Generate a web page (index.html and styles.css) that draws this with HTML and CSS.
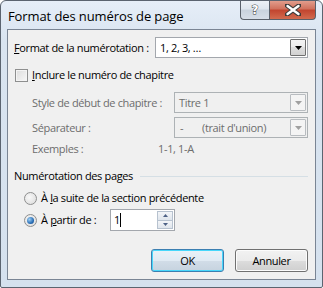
FILE: index.html
```html
<!DOCTYPE html>
<html lang="fr">
<head>
<meta charset="utf-8">
<title>Format des numéros de page</title>
<link rel="stylesheet" href="styles.css">
</head>
<body>
<div class="window">
  <div class="titlebar">
    <span class="title">Format des numéros de page</span>
    <div class="caption-btns">
      <div class="cbtn help">
        <svg width="12" height="13" viewBox="0 0 12 13"><text x="6" y="11" text-anchor="middle" class="qmark">?</text></svg>
      </div>
      <div class="cbtn close">
        <svg width="16" height="12" viewBox="0 0 16 12"><path d="M2 1.5 L14 10.5 M14 1.5 L2 10.5" stroke="#3b3b3b" stroke-width="4.6" stroke-linecap="round"/><path d="M2.5 2 L13.5 10 M13.5 2 L2.5 10" stroke="#ffffff" stroke-width="2.4" stroke-linecap="round"/></svg>
      </div>
    </div>
  </div>
  <div class="client">
    <div class="row row-main">
      <span class="lbl"><u>F</u>ormat de la numérotation :</span>
      <div class="combo combo-main">
        <span class="combo-text">1, 2, 3, …</span>
        <div class="drop"><svg width="7" height="4" viewBox="0 0 7 4"><path d="M0 0 H7 L3.5 4 Z" fill="#000"/></svg></div>
      </div>
    </div>
    <div class="row row-check">
      <span class="checkbox"></span>
      <span class="lbl"><u>I</u>nclure le numéro de chapitre</span>
    </div>
    <div class="row row-sub">
      <span class="lbl dis sublbl">Style de début de chapitre :</span>
      <div class="combo combo-dis">
        <span class="combo-text">Titre 1</span>
        <div class="drop drop-dis"><svg width="7" height="4" viewBox="0 0 7 4"><path d="M0 0 H7 L3.5 4 Z" fill="#a0a0a0"/></svg></div>
      </div>
    </div>
    <div class="row row-sub row-sep">
      <span class="lbl dis sublbl">Séparateur :</span>
      <div class="combo combo-dis">
        <span class="combo-text"><span class="hy">-</span>(trait d'union)</span>
        <div class="drop drop-dis"><svg width="7" height="4" viewBox="0 0 7 4"><path d="M0 0 H7 L3.5 4 Z" fill="#a0a0a0"/></svg></div>
      </div>
    </div>
    <div class="row row-ex">
      <span class="lbl dis sublbl">Exemples :</span>
      <span class="lbl dis ex-val">1-1, 1-A</span>
    </div>
    <div class="row row-group">
      <span class="lbl">Numérotation des pages</span>
      <span class="group-line"></span>
    </div>
    <div class="row row-radio">
      <span class="radio"></span>
      <span class="lbl">À <u>l</u>a suite de la section précédente</span>
    </div>
    <div class="row row-radio2">
      <span class="radio checked"><span class="dot"></span></span>
      <span class="lbl lbl-partir">À <u>p</u>artir de :</span>
      <div class="spin">
        <span class="spin-text">1<span class="caret"></span></span>
        <div class="spin-btns">
          <div class="sbtn"><svg width="5" height="3" viewBox="0 0 5 3"><path d="M0 3 L2.5 0 L5 3 Z" fill="#4d6185"/></svg></div>
          <div class="sbtn"><svg width="5" height="3" viewBox="0 0 5 3"><path d="M0 0 H5 L2.5 3 Z" fill="#4d6185"/></svg></div>
        </div>
      </div>
    </div>
    <div class="row row-buttons">
      <div class="button default">OK</div>
      <div class="button">Annuler</div>
    </div>
  </div>
</div>
</body>
</html>
```

FILE: styles.css
```css
* { box-sizing: border-box; }
html, body { margin: 0; padding: 0; }
body {
  width: 323px;
  height: 288px;
  background: #ffffff;
  font-family: "Open Sans", "Noto Sans", "Liberation Sans", sans-serif;
  font-size: 11px;
  color: #000;
}
.window {
  width: 323px;
  height: 288px;
  border: 1px solid #5b6470;
  border-radius: 6px 6px 2px 2px;
  background: linear-gradient(#e6eef8, #d9e4f0 40px, #d5e1ee);
  display: flex;
  flex-direction: column;
  overflow: hidden;
}
.titlebar {
  height: 28px;
  display: flex;
  justify-content: space-between;
  align-items: flex-start;
  padding-left: 7px;
}
.title {
  font-size: 13px;
  line-height: 30px;
  letter-spacing: -0.1px;
  color: #000;
}
.caption-btns {
  display: flex;
  margin-right: 6px;
  margin-top: -1px;
}
.cbtn {
  height: 20px;
  border: 1px solid #59606a;
  border-top: none;
  display: flex;
  align-items: center;
  justify-content: center;
}
.help {
  width: 29px;
  border-radius: 0 0 0 4px;
  border-right: none;
  background: linear-gradient(#eef2f7, #dfe6ee 45%, #c9d3de 55%, #d6dee8);
}
.qmark {
  font-family: "DejaVu Sans", sans-serif;
  font-size: 12px;
  font-weight: bold;
  fill: #ffffff;
  stroke: #3b3b3b;
  stroke-width: 0.9;
  paint-order: stroke;
}
.close {
  width: 47px;
  border-radius: 0 0 4px 0;
  background: linear-gradient(#e4a292, #d1735f 45%, #c24630 55%, #d26b4f);
}
.client {
  margin: 0 6px 7px 6px;
  flex: 1;
  background: #f0f0f0;
  border: 1px solid #7a8594;
  padding: 0 7px 0 6px;
  display: flex;
  flex-direction: column;
  letter-spacing: -0.35px;
}
.row { display: flex; align-items: center; }
.lbl { white-space: nowrap; line-height: 16px; }
.dis { color: #6d6d6d; }
.row-main { margin-top: 7px; height: 21px; justify-content: space-between; }
.combo {
  height: 21px;
  border: 1px solid #a6aab0;
  display: flex;
  align-items: center;
  justify-content: space-between;
  padding: 0 1px 0 4px;
}
.combo-main { width: 153px; background: #ffffff; border-color: #a3a7ad; }
.combo-text { white-space: nowrap; }
.drop {
  width: 16px;
  height: 17px;
  border: 1px solid #707070;
  border-radius: 1px;
  background: linear-gradient(#f4f4f4, #ececec 50%, #dedede 50%, #d2d2d2);
  display: flex;
  align-items: center;
  justify-content: center;
}
.drop-dis { border-color: #b8bcc0; background: #f4f4f4; }
.combo-dis { width: 134px; background: #f0f0f0; border-color: #adb2b5; color: #6d6d6d; margin-left: auto; }
.hy { display: inline-block; width: 23px; padding-left: 1px; }
.row-check { margin-top: 9px; height: 16px; }
.checkbox {
  width: 13px; height: 13px;
  border: 1px solid #8e8f8f;
  background: linear-gradient(135deg, #dcdcdc, #f7f7f7);
  box-shadow: inset 0 0 0 1px #f4f4f4;
  margin: 0 4px 0 1px;
}
.sublbl { width: 143px; padding-left: 18px; }
.row-sub { margin-top: 9px; height: 21px; }
.row-sep { margin-top: 4px; }
.row-ex { margin-top: 3px; height: 16px; }
.ex-val { padding-left: 1px; }
.row-group { margin-top: 11px; height: 16px; }
.group-line { flex: 1; height: 1px; background: #d5dfe5; margin-left: 7px; }
.row-radio { margin-top: 6px; height: 16px; padding-left: 10px; }
.radio {
  width: 13px; height: 13px;
  border-radius: 50%;
  border: 1px solid #8e8f8f;
  background: radial-gradient(circle at 40% 40%, #f8f8f8, #d9d9d9);
  margin-right: 4px;
  display: flex; align-items: center; justify-content: center;
}
.dot {
  width: 7px; height: 7px; border-radius: 50%;
  background: radial-gradient(circle at 35% 35%, #9fd0f4, #2a6fb7 60%, #0d3d7a);
}
.row-radio2 { margin-top: 3px; height: 22px; padding-left: 10px; }
.lbl-partir { width: 69px; }
.spin {
  width: 65px; height: 22px;
  background: #fff;
  border: 1px solid #a3a7ad;
  display: flex;
  justify-content: space-between;
  align-items: stretch;
  padding: 1px 1px 1px 3px;
}
.spin-text { line-height: 18px; display: flex; align-items: center; }
.caret { display: inline-block; width: 1px; height: 14px; background: #000; margin-left: 0; }
.spin-btns { display: flex; flex-direction: column; width: 16px; }
.sbtn {
  flex: 1;
  border: 1px solid #b7c2cf;
  background: linear-gradient(#f3f5f8, #dfe5ec);
  display: flex; align-items: center; justify-content: center;
}
.sbtn + .sbtn { border-top: none; }
.row-buttons { margin-top: auto; margin-bottom: 7px; justify-content: flex-end; gap: 11px; }
.button {
  width: 73px; height: 23px;
  border: 1px solid #707070;
  border-radius: 3px;
  background: linear-gradient(#f2f2f2, #ebebeb 50%, #dddddd 50%, #cfcfcf);
  box-shadow: inset 0 0 0 1px #fcfcfc;
  display: flex; align-items: center; justify-content: center;
}
.button.default {
  border-color: #3c7fb1;
  box-shadow: inset 0 0 0 1px #48d7fb;
  background: linear-gradient(#eaf2f8, #e0eaf3 50%, #d2dde8 50%, #c6d3df);
}
```
